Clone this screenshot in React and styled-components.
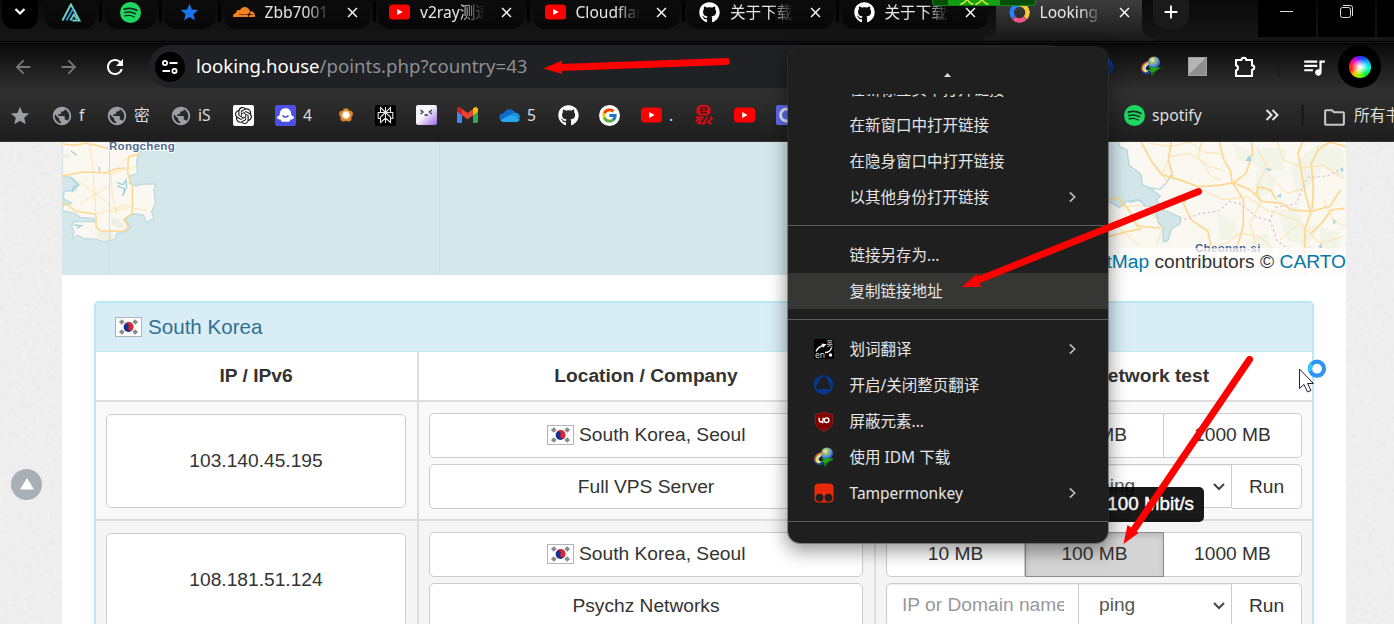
import React from "react";
import styled, { createGlobalStyle, css } from "styled-components";
import { FaGithub } from "react-icons/fa";
import { SiCloudflare, SiOpenai } from "react-icons/si";
import { FcGoogle } from "react-icons/fc";
import {
  MdPublic, MdStar, MdArrowBack, MdArrowForward, MdRefresh, MdQueueMusic,
  MdOutlineFolder, MdAdd, MdClose,
} from "react-icons/md";

const ui = `"Noto Sans", "Noto Sans CJK SC", sans-serif`;
const page = `"Liberation Sans", Arial, sans-serif`;

const Global = createGlobalStyle`
  *, *::before, *::after { box-sizing: border-box; }
  body { margin: 0; overflow: hidden; background: #ededed; }
  svg { display: block; flex: none; }
`;

const Screen = styled.div`
  position: relative;
  width: 1394px;
  height: 624px;
  overflow: hidden;
  display: flex;
  flex-direction: column;
  font-family: ${ui};
`;

/* ---------- browser chrome ---------- */

const TabStrip = styled.header`
  flex: none;
  height: 44px;
  display: flex;
  align-items: flex-start;
  padding-left: 2px;
  background: linear-gradient(#090909, #161616 37px, #141414 41px, #000 41px, #000 42px, #1c1c1c 42px, #181818 43px, #000 43px);
`;

const TabMenuButton = styled.div`
  width: 36px;
  height: 29px;
  margin-right: 7px;
  border-radius: 0 0 12px 12px;
  background: #000;
  display: flex;
  justify-content: center;
  padding-top: 6px;
`;

const Tab = styled.div`
  width: ${(p) => (p.$pinned ? 51 : 146)}px;
  height: 29px;
  flex: none;
  display: flex;
  align-items: center;
  justify-content: ${(p) => (p.$pinned ? "center" : "flex-start")};
  padding: ${(p) => (p.$pinned ? "0 0 5px" : `0 9px 5px ${p.$pad || 12}px`)};
  border-radius: 0 0 12px 12px;
  background: linear-gradient(#0c0c0c, #070707);
  ${(p) =>
    p.$active &&
    css`
      position: relative;
      height: 41px;
      margin-left: 8px;
      padding-bottom: 17px;
      border-radius: 0;
      background: linear-gradient(#3d3d3d, #181818);
      &::before,
      &::after {
        content: "";
        position: absolute;
        bottom: 0;
        width: 12px;
        height: 14px;
      }
      &::before {
        left: -12px;
        background: radial-gradient(circle at 0 0, transparent 11.5px, #1c1c1c 12px);
      }
      &::after {
        right: -12px;
        background: radial-gradient(circle at 100% 0, transparent 11.5px, #1c1c1c 12px);
      }
    `}
`;

const TabDivider = styled.i`
  width: 3px;
  height: 20px;
  margin: 2px ${(p) => p.$after ?? 3}px 0 3px;
  flex: none;
  background: #000;
`;

const TabTitle = styled.span`
  flex: 1;
  width: 0;
  margin-left: 10px;
  margin-right: 13px;
  overflow: hidden;
  white-space: nowrap;
  font-size: 15.6px;
  line-height: 24px;
  color: #e8e8e8;
  mask-image: linear-gradient(90deg, #000 62%, transparent 100%);
`;

const NewTab = styled.div`
  width: 36px;
  height: 29px;
  margin-left: 11px;
  border-radius: 0 0 14px 14px;
  background: #1a1a1a;
  display: flex;
  justify-content: center;
  padding-top: 1px;
`;

const WindowButtons = styled.div`
  margin-left: auto;
  display: flex;
  gap: 2px;
`;

const WindowButton = styled.div`
  width: ${(p) => p.$w}px;
  height: 37px;
  background: #000;
  display: flex;
  justify-content: center;
  padding-top: 4px;
`;

const Chrome = styled.div`
  flex: none;
  height: 98px;
  border-bottom: 1px solid #3a3736;
  background: linear-gradient(#0b0b0b, #2f2f2f 46px, #2c2c2c 60px, #1d1d1d 97px);
`;

const Toolbar = styled.div`
  height: 45px;
  display: flex;
  align-items: center;
`;

const NavButton = styled.div`
  width: 46px;
  display: flex;
  justify-content: center;
  color: ${(p) => (p.$on ? "#fff" : "#77777a")};
`;

const Omnibox = styled.div`
  width: 921px;
  height: 43px;
  margin-left: 11px;
  border-radius: 22px;
  background: #202124;
  display: flex;
  align-items: center;
  padding-left: 6px;
`;

const Url = styled.span`
  padding-bottom: 2px;
  font-size: 18.6px;
  color: #8d9094;
  white-space: nowrap;
  b { color: #fff; font-weight: 400; }
`;

const SiteInfo = styled.div`
  width: 30px;
  height: 30px;
  margin-right: 11px;
  border-radius: 50%;
  background: #000;
  display: grid;
  place-items: center;
`;

const Extensions = styled.div`
  display: flex;
  align-items: center;
  margin-left: 23px;
  gap: ${(p) => p.$gap || 26}px;
`;

const Slot = styled.div`
  width: 21px;
  display: flex;
  justify-content: center;
`;

const GreySquare = styled.div`
  width: 19px;
  height: 19px;
  background: linear-gradient(135deg, #b4b4b4 50%, #8f8f8f 50%);
  border: 1px solid #a0a0a0;
`;

const Rule = styled.i`
  width: ${(p) => p.$w || 2}px;
  height: 20px;
  background: #1b1b1b;
`;

const Profile = styled.div`
  width: 43px;
  height: 43px;
  margin-left: 14px;
  border-radius: 50%;
  background: #000;
  display: grid;
  place-items: center;
`;

const ColorWheel = styled.div`
  width: 22px;
  height: 22px;
  border-radius: 50%;
  background: radial-gradient(#fff 5%, rgba(255, 255, 255, 0) 55%),
    conic-gradient(#33f, #06f 8%, #0cf 18%, #0fc 27%, #0e3 40%, #7f0 50%, #fb0 62%, #f22 70%, #f22 78%, #f0a 86%, #a0f 94%, #33f);
`;

const Bookmarks = styled.div`
  height: 52px;
  display: flex;
  align-items: center;
  padding-left: 9px;
`;

const Bookmark = styled.div`
  width: ${(p) => p.$w}px;
  flex: none;
  display: flex;
  align-items: center;
  gap: ${(p) => p.$gap || 7}px;
  font-size: 15.7px;
  line-height: 22px;
  white-space: nowrap;
  color: #dedede;
`;

const IconBox = styled.span`
  width: 21px;
  height: 21px;
  flex: none;
  display: grid;
  place-items: center;
  border-radius: 2px;
  background: ${(p) => p.$bg || "none"};
  color: ${(p) => p.$c || "#9aa0a6"};
`;

/* ---------- page ---------- */

const Viewport = styled.main`
  flex: 1;
  min-height: 0;
  position: relative;
  display: flex;
  padding-left: 62px;
  font-family: ${page};
  font-size: 19.2px;
  color: #333;
`;

const Texture = styled.svg`
  position: absolute;
  inset: 0;
  width: 100%;
  height: 100%;
`;

const ToTop = styled.div`
  position: absolute;
  left: 11px;
  top: 327px;
  width: 31px;
  height: 31px;
  border-radius: 50%;
  background: #a8b0b6;
  display: grid;
  place-items: center;
  padding-bottom: 2px;
`;

const Content = styled.div`
  position: relative;
  width: 1284px;
  background: #fff;
`;

const MapBox = styled.div`
  position: relative;
  height: 133px;
  overflow: hidden;
  background: #d4e8eb;
`;

const Attribution = styled.div`
  position: absolute;
  right: 0;
  bottom: 0;
  height: 27px;
  line-height: 27px;
  white-space: nowrap;
  background: rgba(255, 255, 255, 0.7);
  span { color: #0078a8; }
`;

const Panel = styled.section`
  margin: 26px 32px 0;
  height: 400px;
  border: 2px solid #bce8f1;
  border-radius: 5px;
`;

const PanelHead = styled.div`
  height: 49px;
  border-bottom: 1px solid #bce8f1;
  border-radius: 3px 3px 0 0;
  background: #d9edf7;
  color: #31708f;
  display: flex;
  align-items: center;
  gap: 6px;
  padding: 0 0 0 19px;
  font-size: 20.6px;
`;

const Row = styled.div`
  display: grid;
  grid-template-columns: 323px 457px 436px;
  height: ${(p) => (p.$head ? 50 : 119)}px;
  border-bottom: 2px solid #ddd;
  background: ${(p) => p.$bg || "#fff"};
  font-weight: ${(p) => (p.$head ? 700 : 400)};
`;

const Cell = styled.div`
  padding: 11px 11px 10px 10px;
  display: flex;
  flex-direction: column;
  gap: 6px;
  border-right: 2px solid #ddd;
  &:last-child { border-right: 0; padding-right: 10px; }
`;

const HeadCell = styled(Cell)`
  padding: 0 1px 0 0;
  justify-content: center;
  align-items: center;
  &:last-child { padding: 0 0 0 2px; }
`;

const Box = styled.div`
  height: ${(p) => p.$h || 45}px;
  margin-top: ${(p) => p.$mt || 0}px;
  flex: none;
  display: flex;
  align-items: center;
  justify-content: center;
  gap: 5.5px;
  padding-bottom: ${(p) => p.$pb || 0}px;
  border: 1px solid #ccc;
  border-radius: 5px;
  background: #fff;
`;

const Group = styled.div`
  display: grid;
  grid-template-columns: ${(p) => p.$cols};
  height: 45px;
`;

const Segment = styled.div`
  position: relative;
  height: ${(p) => p.$h || 45}px;
  display: flex;
  align-items: center;
  justify-content: ${(p) => (p.$field ? "space-between" : "center")};
  padding: ${(p) => (p.$field ? "0 5px 1px 20px" : `0 0 ${p.$pb ?? 1}px`)};
  border: 1px solid #ccc;
  border-left-width: ${(p) => (p.$first || p.$active ? 1 : 0)}px;
  border-radius: ${(p) => (p.$first ? "5px 0 0 5px" : p.$last ? "0 5px 5px 0" : 0)};
  background: #fff;
  color: ${(p) => (p.$field ? "#555" : "#333")};
  box-shadow: ${(p) => (p.$field ? "inset 0 1px 1px rgba(0,0,0,.075)" : "none")};
  ${(p) =>
    p.$active &&
    css`
      background: #d4d4d4;
      border-color: #8c8c8c;
      box-shadow: inset 0 3px 5px rgba(0, 0, 0, 0.125);
    `}
`;

const Placeholder = styled.div`
  width: 162px;
  margin-left: -5px;
  overflow: hidden;
  white-space: nowrap;
  color: #999;
`;

const Tooltip = styled.div`
  position: absolute;
  z-index: 2;
  right: -41px;
  top: -46px;
  width: 220px;
  height: 35px;
  padding-right: 10px;
  border-radius: 5px;
  background: rgba(0, 0, 0, 0.9);
  color: #fff;
  text-align: right;
  line-height: 33px;
  font-size: 18.8px;
  -webkit-text-stroke: 0.4px #fff;
`;

/* ---------- context menu ---------- */

const Menu = styled.div`
  position: absolute;
  z-index: 5;
  left: 788px;
  top: 47px;
  width: 320px;
  height: 496px;
  border-radius: 12px;
  overflow: hidden;
  background: #1f1f1f;
  color: #e6e6e6;
  font-size: 15.5px;
`;

const MenuShadow = styled.div`
  position: absolute;
  z-index: 4;
  left: 788px;
  top: 47px;
  width: 320px;
  height: 496px;
  border-radius: 12px;
  box-shadow: 0 0 0 1px rgba(60, 60, 60, 0.45), 0 6px 18px 2px rgba(0, 0, 0, 0.4);
`;

const ScrollUp = styled.div`
  height: 47px;
  display: flex;
  justify-content: center;
  padding: 26px 1px 0 0;
`;

const MenuList = styled.div`
  overflow: hidden;
`;

const MenuItem = styled.div`
  height: 36px;
  margin-top: ${(p) => (p.$cut ? -23 : 0)}px;
  display: flex;
  align-items: center;
  padding: 0 31px 0 25px;
  background: ${(p) => (p.$hover ? "#363635" : "none")};
`;

const MenuIcon = styled.span`
  width: 21px;
  margin-right: 15.5px;
  display: grid;
  place-items: center;
`;

const MenuLabel = styled.span`
  flex: 1;
  white-space: nowrap;
  line-height: 36px;
`;

const MenuRule = styled.div`
  height: 1px;
  margin: 10px 0 11px;
  background: #5c5c5c;
`;

const Overlay = styled.svg`
  position: absolute;
  z-index: 8;
  left: 0;
  top: 0;
`;

const Recorder = styled.div`
  position: absolute;
  z-index: 6;
  left: 932px;
  top: 0;
  width: 104px;
  height: 6px;
  overflow: hidden;
  border: solid #0a8a12;
  border-width: 0 1px 1px;
  border-radius: 0 0 4px 4px;
  background: linear-gradient(90deg, #054d08 15%, #12a012 15%, #12a012 66%, #054d08 66%);
  display: flex;
  align-items: flex-end;
  padding-left: 26px;
  color: #e9f23a;
  font-size: 15px;
  line-height: 15px;
`;

/* ---------- drawings ---------- */

const Flag = () => (
  <svg width="27" height="20" viewBox="0 0 27 20">
    <rect x=".5" y=".5" width="26" height="19" fill="#fff" stroke="#b3b3b3" />
    <g stroke="#8a8a8a" strokeWidth="4">
      <path d="M5.200 6.300l3.200-2.600M18.600 16.300l3.200-2.600" />
      <path d="M5.200 13.700l3.200 2.600M18.600 3.700l3.200 2.600" />
    </g>
    <g transform="rotate(25 13.5 10)">
      <circle cx="13.5" cy="10" r="4.9" fill="#15308f" />
      <path d="M8.6 10a4.9 4.9 0 0 1 9.8 0 2.45 2.45 0 0 1-4.9 0 2.45 2.45 0 0 0-4.9 0" fill="#e0252f" />
    </g>
  </svg>
);

const YouTube = () => (
  <svg width="21" height="16" viewBox="0 0 21 16">
    <rect y=".5" width="21" height="15" rx="3.5" fill="#f00" />
    <path d="M8.2 5v6l5.4-3z" fill="#fff" />
  </svg>
);

const SpotifyMark = () => (
  <svg width="21" height="21" viewBox="0 0 21 21">
    <circle cx="10.5" cy="10.5" r="10.5" fill="#1ed760" />
    <g fill="none" stroke="#14301d" strokeLinecap="round">
      <path d="M4.3 7.2c4.2-1.3 8.7-.9 12.5 1.1" strokeWidth="1.9" />
      <path d="M4.8 10.6c3.7-1.1 7.5-.6 10.7 1.1" strokeWidth="1.6" />
      <path d="M5.2 13.8c3.2-.8 6.2-.5 9 1" strokeWidth="1.4" />
    </g>
  </svg>
);

const Triangle = () => (
  <svg width="20" height="19" viewBox="0 0 20 19" fill="none">
    <path d="M1.500 17.500L8.500 4l1.500-2.500 8.500 16h-7.200" stroke="#6fd0c4" strokeWidth="2" />
    <path d="M5.400 17.500L12 6" stroke="#2f8fe0" strokeWidth="2" />
    <path d="M9.400 17.500l3.400-6 3 4.600" stroke="#6fd0c4" strokeWidth="1.8" />
  </svg>
);

const LookingRing = () => (
  <svg width="21" height="21" viewBox="0 0 21 21" fill="none" strokeWidth="4.400">
    <path d="M4.600 15.500A8 8 0 0 1 10.500 2.500" stroke="#2d7ff9" />
    <path d="M10.500 2.500a8 8 0 0 1 6 13.200" stroke="#fcc934" />
    <path d="M4.800 16a8 8 0 0 0 11.500 0" stroke="#f0558a" />
  </svg>
);

const Idm = () => (
  <svg width="21" height="21" viewBox="0 0 21 21">
    <defs>
      <radialGradient id="globe" cx=".38" cy=".3" r=".75">
        <stop offset="0" stopColor="#e9f0c8" />
        <stop offset=".35" stopColor="#9db56a" />
        <stop offset=".6" stopColor="#5c94dc" />
        <stop offset="1" stopColor="#1a3f94" />
      </radialGradient>
    </defs>
    <path d="M8 4.800C3.500 6 .6 9.500.8 13c.3 3.800 4.200 5.800 8.700 5l1-2.500C7 15 6 13 6.400 11L9 7z" fill="#223f9c" />
    <path d="M8.300 5.600C4.500 6.800 1.700 9.500 1.900 12.500c.2 1.300.6 2 1.200 2.600" fill="none" stroke="#d8402a" strokeWidth="1.400" />
    <path d="M8.600 6.800C5.500 8 3.300 10.300 3.300 12.500c0 1.800 1.200 3 3 3.400" fill="none" stroke="#f4e23c" strokeWidth="1.600" />
    <path d="M9 8C6.500 9.200 4.800 10.800 4.800 12.500c0 1.500 1.200 2.400 3 2.700" fill="none" stroke="#f6f6ea" strokeWidth="1.300" />
    <circle cx="14" cy="6.600" r="6" fill="url(#globe)" />
    <path d="M8 11l13 .8-5.500 3.400-3.700 4.600-1-4.300-4-1.200 4.200-1.300z" fill="#22a51e" />
    <path d="M21 11.800l-5.500 3.400-3.700 4.600-.4-3z" fill="#0f6d18" />
  </svg>
);

const BlueRing = () => (
  <svg width="21" height="20" viewBox="0 0 21 20">
    <circle cx="10.500" cy="9.800" r="9.800" fill="#07368c" />
    <path d="M10.500 1.800c2.300 0 3.300 1.500 3.900 3.800.6 2.500 2.900 4.400 3.300 6.500.3 1.500-.4 2.300-1.700 2.300-2 0-3.300-.9-5.500-.9s-3.500.9-5.500.9c-1.300 0-2-.8-1.700-2.300.4-2.100 2.700-4 3.300-6.500.6-2.300 1.600-3.800 3.900-3.800z" fill="#1f1f1f" />
  </svg>
);

const Shield = () => (
  <svg width="20" height="21" viewBox="0 0 20 21">
    <path d="M10 .8c2.500 1.700 5.500 2.400 8.700 2.400v7.500c0 4.800-4 7.500-8.700 9.700-4.700-2.200-8.700-4.900-8.700-9.700V3.200C4.500 3.200 7.500 2.500 10 .8z" fill="#800000" stroke="#a33" strokeWidth=".6" />
    <g fill="none" stroke="#fff" strokeWidth="1.400">
      <path d="M5.200 6.800v2.700a2 2 0 0 0 3.900 0V6.800M8 11.600h1.500" />
      <circle cx="12.600" cy="9.200" r="2.300" />
    </g>
  </svg>
);

const Tamper = () => (
  <svg width="20" height="20" viewBox="0 0 20 20">
    <rect x=".5" y=".5" width="19" height="19" rx="4" fill="#e8290b" />
    <circle cx="5.600" cy="14.600" r="3.900" fill="#1f1f1f" />
    <circle cx="14.400" cy="14.600" r="3.900" fill="#1f1f1f" />
  </svg>
);

const Translate = () => (
  <svg width="20" height="20" viewBox="0 0 20 20">
    <rect width="20" height="20" rx="2" fill="#000" />
    <path d="M2 12.500c1.500-3 4-5.200 7-6M11 13.500c3 0 6-2 6.500-5" fill="none" stroke="#fff" strokeWidth="1.500" />
    <path d="M7.500 4.500l5 .8-3.500 3.500z" fill="#fff" />
    <circle cx="16.500" cy="16" r="1.700" fill="#fff" />
    <text x="1" y="18.500" fontSize="8.500" fill="#ddd" fontFamily="Noto Sans">en</text>
    <text x="12.500" y="7" fontSize="6.500" fill="#ddd" fontFamily="Noto Sans CJK SC">英</text>
  </svg>
);

const Chevron = () => (
  <svg width="9" height="12" viewBox="0 0 9 12" fill="none" stroke="#b9b9b9" strokeWidth="1.700">
    <path d="M1.800 1.300L6.700 6l-4.900 4.700" />
  </svg>
);

const SelectArrow = () => (
  <svg width="14" height="10" viewBox="0 0 14 10" fill="none" stroke="#444" strokeWidth="2">
    <path d="M2 3l5 5 5-5" />
  </svg>
);

const SiteTune = () => (
  <svg width="18" height="16" viewBox="0 0 18 16" fill="none" stroke="#fff" strokeWidth="1.800">
    <circle cx="4" cy="4" r="2.100" />
    <path d="M8.500 4H16.500M1.500 12H9" />
    <circle cx="13.500" cy="12" r="2.100" />
  </svg>
);

const Puzzle = () => (
  <svg width="24" height="24" viewBox="0 0 24 24" fill="none" stroke="#fff" strokeWidth="2.100" strokeLinejoin="round">
    <path d="M3 5h5.500a2.300 2.300 0 0 1 4.600 0H19v5.400a2.200 2.200 0 0 1 0 4.400V21H3v-5.500a2.700 2.700 0 0 0 0-5.200z" />
  </svg>
);

const Ghost = () => (
  <svg width="19" height="17" viewBox="0 0 19 17">
    <path d="M9.500 1.200c3.400 0 5.600 2.200 5.600 5.300 0 1.600.9 2.600 2.900 3.200.2 1.800-1.300 3-3.500 2.700-.5 1.500-1.400 2.400-2.500 2.300-.9 0-1.500-.3-2.500-.3s-1.600.3-2.500.3c-1.100.1-2-.8-2.500-2.300-2.200.3-3.700-.9-3.500-2.700 2-.6 2.900-1.600 2.900-3.200 0-3.100 2.200-5.300 5.600-5.300z" fill="#fff" />
    <path d="M6.500 8.500q3 3.200 6 0" fill="none" stroke="#4b50e6" strokeWidth="1.500" />
  </svg>
);

const Flower = () => (
  <svg width="16" height="16" viewBox="0 0 16 16">
    <g fill="#d98428">
      <circle cx="8" cy="4.400" r="3.200" /><circle cx="11.700" cy="7" r="3.200" />
      <circle cx="10.300" cy="11.200" r="3.200" /><circle cx="5.700" cy="11.200" r="3.200" /><circle cx="4.300" cy="7" r="3.200" />
    </g>
    <circle cx="8" cy="8" r="4.400" fill="#f0c08e" />
    <circle cx="8" cy="8" r="3" fill="#fff" />
  </svg>
);

const Perplexity = () => (
  <svg width="17" height="18" viewBox="0 0 17 18" fill="none" stroke="#e6e6e6" strokeWidth="1.100">
    <path d="M8.500 1v16M3.500 1.500l5 5 5-5v5h-10zM3.500 6.500h-2.300v6h2.300M13.500 6.500h2.300v6h-2.300M8.500 6.500l-5 4.500v5.500l5-4.500 5 4.500V11z" />
  </svg>
);

const Face = () => (
  <svg width="21" height="20" viewBox="0 0 21 20">
    <defs>
      <linearGradient id="face" x1="0" y1="0" x2="1" y2="1">
        <stop offset=".45" stopColor="#f7f5fb" /><stop offset="1" stopColor="#9a63e0" />
      </linearGradient>
    </defs>
    <rect width="21" height="20" rx="2" fill="url(#face)" />
    <path d="M4.500 5l2.500 2-2.500 2M16 5l-2.500 2L16 9M8.500 10H12" fill="none" stroke="#333c55" strokeWidth="1.400" />
  </svg>
);

const Gmail = () => (
  <svg width="21" height="16" viewBox="0 0 21 16">
    <path d="M0 3v11.500A1.500 1.500 0 0 0 1.500 16H5V5z" fill="#4285f4" />
    <path d="M21 3v11.500a1.500 1.500 0 0 1-1.500 1.500H16V5z" fill="#34a853" />
    <path d="M16 1.500l1.500-1C19-.6 21 .5 21 2.500V4.500l-5 3.700z" fill="#fbbc04" />
    <path d="M5 8.200V2l5.500 4L16 2v6.200l-5.500 4z" fill="#ea4335" />
    <path d="M0 4.500v-2C0 .5 2-.6 3.500.5L5 1.500v6.700z" fill="#c5221f" />
  </svg>
);

const OneDrive = () => (
  <svg width="21" height="14" viewBox="0 0 21 14">
    <path d="M5 5a6 6 0 0 1 11-.5L10 10 2 12.500A4.200 4.200 0 0 1 5 5z" fill="#0f6cc8" />
    <path d="M12 6.500A5 5 0 0 1 16 4.500c3 .3 5 2.300 5 5l-4 1z" fill="#1890e0" />
    <path d="M1.500 12.300L12 6.500l8.800 4.500A3.500 3.500 0 0 1 17.500 14H4.500c-1.200 0-2.300-.6-3-1.700z" fill="#28a8ea" />
  </svg>
);

const Squid = () => (
  <svg width="18" height="20" viewBox="0 0 18 20">
    <path d="M4.500 0h8L15.500 3v5l-3 2.500h-8L1.500 8V3z" fill="#e00b12" />
    <path d="M6 5h5.500V2.500H6v5.300h6" fill="none" stroke="#2a1416" strokeWidth="1.200" />
    <path d="M1 12.500h4L1 16.500M8.500 11.500l-5 6.500h3M12.500 12.500L8 18.500h2M15.500 11.500l1.500 2-4 3.500 4 2" fill="none" stroke="#e00b12" strokeWidth="1.800" />
  </svg>
);

const LetterRing = () => (
  <svg width="21" height="20" viewBox="0 0 21 20">
    <rect width="21" height="20" rx="2" fill="#5c6ae8" />
    <circle cx="10.500" cy="10" r="6" fill="none" stroke="#dfe6ff" strokeWidth="3" />
  </svg>
);

const MapArt = () => (
  <svg width="1284" height="133" viewBox="0 0 1284 133">
    <g transform="translate(-62 -2) scale(.33333)">
      <path
        d="M186 0H425L420 35 410 60 412 100 388 108 390 130 405 138 430 132 468 132 462 150 466 190 455 215 461 235 440 248 430 225 400 222 375 238 392 262 375 275 350 280 345 298 310 305 290 298 250 295 232 285 215 298 222 275 215 258 222 245 285 245 280 235 240 232 225 220 186 212 190 195 215 190 190 175 192 155 225 150 236 135 212 112 186 108z"
        fill="#fbf8f2" stroke="#bddbe0" strokeWidth="4" strokeLinejoin="round"
      />
      <path d="M212 112l24 22-16 8-4 15M350 128l20 6 8-14 2 20-12 28 6-22-22-8M212 32l18 14M298 80v14M222 255l22 2-14 8" fill="none" stroke="#a5d0da" strokeWidth="4" />
      <path d="M186 45l24-5v14h-24zM335 235l20 0 20 25-20 5-20-12zM285 285l25-12 30 8v14l-30 8z" fill="#eef1e2" />
      <g fill="none" stroke="#fdd78d" strokeWidth="4.500">
        <path d="M186 12l40 4 30-6 40 8 30 8M186 108l60-12 72 2 30-12 30-2M420 42l-35 8-2 50 14 40v80l-26 18 14 22-14 14-70-2-12-10-2-42M186 190l14 2 28 22 58 8" />
      </g>
      <g fill="none" stroke="#fee3b3" strokeWidth="3">
        <path d="M268 16l10 50 4 80 6 78M382 52l-48 50 2 60 14 60M225 115l130 98M325 104l86-24M240 190l90-54M286 222l100-28M330 218l60-16 50 10" />
      </g>
    </g>
    <path d="M47.500 0V133M377.500 0V133" stroke="#cddfe2" />
    <g transform="translate(1028 -2) scale(.33333)">
      <path d="M-80 0H768V410H-80z" fill="#fbf8f2" />
      <path d="M-80 0H85l4 20 22 10 6 45 36 28 4 30 30 16 24 20-12 8 16 30 28 12 30 14-4 20-24 12-12 38-14 2V265l-14-18-12-46-28-4-18-18-40 6-18 18-32-18-30-22-40-6z" fill="#d2e6ea" stroke="#b5d8de" strokeWidth="4" />
      <path d="M172 142l38 6 20-20 14-24M118 188l30-8 20 18" fill="none" stroke="#b5d8de" strokeWidth="4" />
      <path d="M430 10l60 30 40-20 60 10-10 60-60 10-30-30-50-10zM500 95l60 10-14 50-50 20zM600 80l50-40 40-30 70 20v90l-60-40-30 50-50 30zM380 220l50 20 20 50-60 10zM560 210l60-10 20 50 50 10-40 60-60-20zM690 260l60 20v90l-60-40zM470 300l60-20 20 60-60 20z" fill="#f1f4e7" />
      <g fill="none" stroke="#fdd78d" strokeWidth="5">
        <path d="M150 0l36 66 30 38 60 18 50 18 60-4 45-8 50 22 36 34 58 6 30 20 60 4 56-16 30-48M386 0l16 60 20 34 4 32 18 28 16 24v80l-20 70M484 0l4 40-20 60-36 28M245 0l-10 60 14 50M640 0l-16 40 22 120 16 60-18 50v140M768 20l-50-14-34 24-20 40 6 80-4 58M55 180l30-6 30 34 26 50 70 6M55 290l60-16 40-8M300 160l-20 30 24 50 50 34 8 40-14 30M560 180l-18-30-36-10-10 26M664 280l30-30 30-40 40-5" />
      </g>
      <g fill="none" stroke="#fee0a8" strokeWidth="3">
        <path d="M180 10l60 10 60-14 40 30 60 6M230 130l-12-30 20-50 60-10 60 40 40 10M260 190l80-40 60 30 70-10 60 40 90 30 60 60M335 0l-10 50 40 60 30 10M320 330l90-20 40-30 60 10 40 40M500 20l30 60-30 60 10 50-30 60 20 70M560 0l20 60 60 24 60-8 60 40M540 110l50 50 40-10M90 200l70-4 60 60-20 60M60 240l90 80M570 300l60-50 60 60 70-20M700 180l30 60 38 20M600 340l50-20 60 20" />
      </g>
      <path d="M268 244l60-22 60-10 30-28 40 10 40 36 40 12 20-40 60-10 34-80 60-4 54-28M540 240l20 60 40 30" fill="none" stroke="#dfc3cc" strokeWidth="4" strokeDasharray="7 8" />
      <path d="M466 62l14-18 4 20zM526 84l20 4-10 6zM560 168l14-8-2 14zM684 320l12-10v16zM750 90l10-8v14zM730 236l8 10-8 8z" fill="#a5d3e2" />
    </g>
    <text x="47" y="8" fontFamily="Liberation Sans" fontSize="11.600" fontWeight="700" letterSpacing=".25" fill="#4f6d8f" stroke="#fff" strokeWidth="2" paintOrder="stroke">Rongcheng</text>
    <text x="1133" y="110" fontFamily="Liberation Sans" fontSize="11.600" fontWeight="700" letterSpacing=".25" fill="#4a6286" stroke="#fff" strokeWidth="2" paintOrder="stroke">Cheonan-si</text>
  </svg>
);

const TABS = [
  { icon: <SiCloudflare size={22} color="#f6821f" />, title: "Zbb7001", pad: 9 },
  { icon: <YouTube />, title: "v2ray测速", pad: 11 },
  { icon: <YouTube />, title: "Cloudflare" },
  { icon: <FaGithub size={21} color="#fff" />, title: "关于下载速" },
  { icon: <FaGithub size={21} color="#fff" />, title: "关于下载速" },
];

const MARKS = [
  [42, <IconBox><MdStar size={22} /></IconBox>],
  [55, <IconBox><MdPublic size={22} /></IconBox>, "f"],
  [64, <IconBox><MdPublic size={22} /></IconBox>, "密"],
  [63, <IconBox><MdPublic size={22} /></IconBox>, "iS"],
  [42, <IconBox $bg="#fff" $c="#111"><SiOpenai size={17} /></IconBox>],
  [60, <IconBox $bg="#4b50e6"><Ghost /></IconBox>, "4"],
  [40, <IconBox><Flower /></IconBox>],
  [41, <IconBox $bg="#000"><Perplexity /></IconBox>],
  [41, <IconBox><Face /></IconBox>],
  [42, <IconBox><Gmail /></IconBox>],
  [59, <IconBox><OneDrive /></IconBox>, "5"],
  [41, <IconBox $c="#fff"><FaGithub size={21} /></IconBox>],
  [42, <IconBox><svg width="21" height="21"><circle cx="10.500" cy="10.500" r="10.500" fill="#fff" /><FcGoogle x="2" y="2" size={17} /></svg></IconBox>],
  [52, <IconBox><YouTube /></IconBox>, "."],
  [41, <IconBox><Squid /></IconBox>],
  [42, <IconBox><YouTube /></IconBox>],
  [348, <IconBox><LetterRing /></IconBox>],
  [138, <IconBox><SpotifyMark /></IconBox>, "spotify"],
];

const MENU = [
  { label: "在新标签页中打开链接", cut: true },
  { label: "在新窗口中打开链接" },
  { label: "在隐身窗口中打开链接" },
  { label: "以其他身份打开链接", more: true },
  { rule: true },
  { label: "链接另存为..." },
  { label: "复制链接地址", hover: true },
  { rule: true },
  { label: "划词翻译", icon: <Translate />, more: true },
  { label: "开启/关闭整页翻译", icon: <BlueRing /> },
  { label: "屏蔽元素...", icon: <Shield /> },
  { label: "使用 IDM 下载", icon: <Idm /> },
  { label: "Tampermonkey", icon: <Tamper />, more: true },
  { rule: true },
];

const SERVERS = [
  { ip: "103.140.45.195", company: "Full VPS Server", bg: "#f9f9f9" },
  { ip: "108.181.51.124", company: "Psychz Networks", bg: "#f5f5f5", active: true },
];

function ServerRow({ ip, company, bg, active }) {
  return (
    <Row $bg={bg}>
      <Cell><Box $h={94} $mt={1}>{ip}</Box></Cell>
      <Cell>
        <Box $pb={2}><Flag />South Korea, Seoul</Box>
        <Box>{company}</Box>
      </Cell>
      <Cell>
        <Group $cols="139px 139px 138px">
          <Segment $first>10 MB</Segment>
          <Segment $active={active}>
            100 MB
            {active && <Tooltip>100 Mbit/s</Tooltip>}
          </Segment>
          <Segment $last>1000 MB</Segment>
        </Group>
        <Group $cols="193px 153px 70px">
          <Segment $first $field $h={44}><Placeholder>IP or Domain name</Placeholder></Segment>
          <Segment $field $h={44}>ping<SelectArrow /></Segment>
          <Segment $last $pb={0}>Run</Segment>
        </Group>
      </Cell>
    </Row>
  );
}

export default function App() {
  return (
    <Screen>
      <Global />
      <TabStrip>
        <TabMenuButton>
          <svg width="12" height="12" viewBox="0 0 12 12" fill="none" stroke="#fff" strokeWidth="2.200"><path d="M1.500 3L6 7.500 10.500 3" /></svg>
        </TabMenuButton>
        <Tab $pinned><Triangle /></Tab>
        <TabDivider />
        <Tab $pinned><SpotifyMark /></Tab>
        <TabDivider $after={2} />
        <Tab $pinned><MdStar size={21} color="#1a73e8" /></Tab>
        {TABS.map((t, i) => (
          <React.Fragment key={i}>
            <TabDivider $after={2.5} />
            <Tab $pad={t.pad}>
              {t.icon}
              <TabTitle>{t.title}</TabTitle>
              <MdClose size={17} color="#fff" />
            </Tab>
          </React.Fragment>
        ))}
        <Tab $active $pad={13}>
          <LookingRing />
          <TabTitle>Looking</TabTitle>
          <MdClose size={17} color="#fff" />
        </Tab>
        <NewTab><MdAdd size={22} color="#fff" /></NewTab>
        <WindowButtons>
          <WindowButton $w={58}><svg width="14" height="14"><path d="M0 7.500H13" stroke="#ddd" /></svg></WindowButton>
          <WindowButton $w={57}>
            <svg width="16" height="16" fill="none" stroke="#ddd"><rect x="1.500" y="3.500" width="10" height="10" rx="2" /><path d="M4 1.500h7.500a2 2 0 0 1 2 2V12" /></svg>
          </WindowButton>
          <WindowButton $w={17} />
        </WindowButtons>
      </TabStrip>

      <Chrome>
        <Toolbar>
          <NavButton><MdArrowBack size={22} /></NavButton>
          <NavButton><MdArrowForward size={22} /></NavButton>
          <NavButton $on><MdRefresh size={24} /></NavButton>
          <Omnibox>
            <SiteInfo><SiteTune /></SiteInfo>
            <Url><b>looking.house</b>/points.php?country=43</Url>
          </Omnibox>
          <Extensions>
            <Slot><BlueRing /></Slot>
            <Slot><Idm /></Slot>
            <Slot><GreySquare /></Slot>
            <Slot><Puzzle /></Slot>
          </Extensions>
          <Extensions $gap={23}>
            <Rule />
            <Slot><MdQueueMusic size={26} color="#fff" /></Slot>
          </Extensions>
          <Profile><ColorWheel /></Profile>
        </Toolbar>
        <Bookmarks>
          {MARKS.map(([w, icon, label], i) => (
            <Bookmark key={i} $w={w}>{icon}{label}</Bookmark>
          ))}
          <Bookmark $w={39}>
            <svg width="20" height="16" viewBox="0 0 20 16" fill="none" stroke="#e6e6e6" strokeWidth="2"><path d="M4.500 3L9.500 8l-5 5M10.500 3l5 5-5 5" /></svg>
          </Bookmark>
          <Bookmark $w={21}><Rule $w={3} /></Bookmark>
          <Bookmark $w={90} $gap={11}><IconBox $c="#c4c7c5"><MdOutlineFolder size={25} /></IconBox>所有书签</Bookmark>
        </Bookmarks>
      </Chrome>

      <Viewport>
        <Texture>
          <filter id="paper" x="0" y="0" width="100%" height="100%">
            <feTurbulence type="fractalNoise" baseFrequency=".22 .26" numOctaves="4" seed="6" />
            <feColorMatrix values="0 0 0 0 .55  0 0 0 0 .55  0 0 0 0 .55  .5 .3 0 0 -.3" />
          </filter>
          <rect width="100%" height="100%" fill="#f0f0f0" />
          <rect width="100%" height="100%" filter="url(#paper)" opacity=".4" />
        </Texture>
        <ToTop><svg width="14" height="12"><path d="M7 0l7 11.500H0z" fill="#fff" /></svg></ToTop>
        <Content>
          <MapBox>
            <MapArt />
            <Attribution><span>OpenStreetMap</span> contributors © <span>CARTO</span></Attribution>
          </MapBox>
          <Panel>
            <PanelHead><Flag />South Korea</PanelHead>
            <Row $head>
              <HeadCell>IP / IPv6</HeadCell>
              <HeadCell>Location / Company</HeadCell>
              <HeadCell>Speed test / Network test</HeadCell>
            </Row>
            {SERVERS.map((s) => <ServerRow key={s.ip} {...s} />)}
          </Panel>
        </Content>
      </Viewport>

      <MenuShadow />
      <Menu>
        <ScrollUp><svg width="7" height="4"><path d="M3.500 0L7 4H0z" fill="#ddd" /></svg></ScrollUp>
        <MenuList>
          {MENU.map((m, i) =>
            m.rule ? <MenuRule key={i} /> : (
              <MenuItem key={i} $cut={m.cut} $hover={m.hover}>
                <MenuIcon>{m.icon}</MenuIcon>
                <MenuLabel>{m.label}</MenuLabel>
                {m.more && <Chevron />}
              </MenuItem>
            )
          )}
        </MenuList>
      </Menu>

      <Recorder>关关</Recorder>

      <Overlay width="1394" height="624">
        <g stroke="#f00" strokeWidth="7" strokeLinecap="round" fill="#f00">
          <path d="M726.500 61.500L560 67.500" />
          <path d="M1198.500 191.500L977 280.500" />
          <path d="M1249.500 359.500L1133 531" />
        </g>
        <path d="M543.500 68.500l18.500-8v13.500zM961.700 287l15-13 4.300 13zM1123.500 544l4-19 11 8z" fill="#f00" />
        <path d="M1299.500 369v19.500l4.500-4 3.500 7.500 3.500-1.500-3.500-7h6z" fill="#fff" stroke="#223" />
        <circle cx="1317" cy="368.700" r="7" fill="#fff" stroke="#2d93f5" strokeWidth="4.200" />
        <path d="M1310.300 371a7 7 0 0 1 1.500-7" fill="none" stroke="#35c4fb" strokeWidth="4.200" />
      </Overlay>
    </Screen>
  );
}
